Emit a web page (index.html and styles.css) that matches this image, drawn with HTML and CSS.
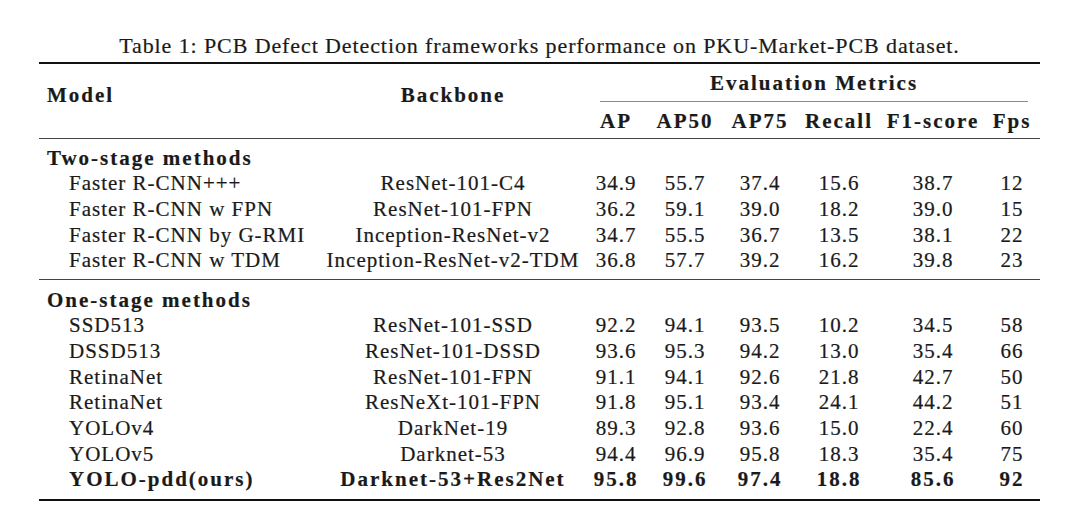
FILE: index.html
```html
<!DOCTYPE html>
<html lang="en">
<head>
<meta charset="utf-8">
<title>Table 1: PCB Defect Detection frameworks performance</title>
<link rel="stylesheet" href="styles.css">
</head>
<body>
<figure class="fig">
  <figcaption class="caption">Table 1: PCB Defect Detection frameworks performance on PKU-Market-PCB dataset.</figcaption>
  <table class="tbl">
    <colgroup>
      <col class="w-model">
      <col class="w-bb">
      <col class="w-ap">
      <col class="w-ap50">
      <col class="w-ap75">
      <col class="w-recall">
      <col class="w-f1">
      <col class="w-fps">
    </colgroup>
    <thead>
      <tr class="h1">
        <th rowspan="2" class="c-model head-span">Model</th>
        <th rowspan="2" class="head-span">Backbone</th>
        <th colspan="6" class="group"><div class="group-label">Evaluation Metrics</div></th>
      </tr>
      <tr class="h2">
        <th>AP</th>
        <th>AP50</th>
        <th>AP75</th>
        <th>Recall</th>
        <th>F1-score</th>
        <th>Fps</th>
      </tr>
    </thead>
    <tbody class="sec sec-first">
      <tr class="sec-head"><td colspan="8" class="c-model">Two-stage methods</td></tr>
      <tr><td class="c-name">Faster R-CNN+++</td><td>ResNet-101-C4</td><td>34.9</td><td>55.7</td><td>37.4</td><td>15.6</td><td>38.7</td><td>12</td></tr>
      <tr><td class="c-name">Faster R-CNN w FPN</td><td>ResNet-101-FPN</td><td>36.2</td><td>59.1</td><td>39.0</td><td>18.2</td><td>39.0</td><td>15</td></tr>
      <tr><td class="c-name">Faster R-CNN by G-RMI</td><td>Inception-ResNet-v2</td><td>34.7</td><td>55.5</td><td>36.7</td><td>13.5</td><td>38.1</td><td>22</td></tr>
      <tr><td class="c-name">Faster R-CNN w TDM</td><td>Inception-ResNet-v2-TDM</td><td>36.8</td><td>57.7</td><td>39.2</td><td>16.2</td><td>39.8</td><td>23</td></tr>
    </tbody>
    <tbody class="sec sec-next sec-last">
      <tr class="sec-head"><td colspan="8" class="c-model">One-stage methods</td></tr>
      <tr><td class="c-name">SSD513</td><td>ResNet-101-SSD</td><td>92.2</td><td>94.1</td><td>93.5</td><td>10.2</td><td>34.5</td><td>58</td></tr>
      <tr><td class="c-name">DSSD513</td><td>ResNet-101-DSSD</td><td>93.6</td><td>95.3</td><td>94.2</td><td>13.0</td><td>35.4</td><td>66</td></tr>
      <tr><td class="c-name">RetinaNet</td><td>ResNet-101-FPN</td><td>91.1</td><td>94.1</td><td>92.6</td><td>21.8</td><td>42.7</td><td>50</td></tr>
      <tr><td class="c-name">RetinaNet</td><td>ResNeXt-101-FPN</td><td>91.8</td><td>95.1</td><td>93.4</td><td>24.1</td><td>44.2</td><td>51</td></tr>
      <tr><td class="c-name">YOLOv4</td><td>DarkNet-19</td><td>89.3</td><td>92.8</td><td>93.6</td><td>15.0</td><td>22.4</td><td>60</td></tr>
      <tr><td class="c-name">YOLOv5</td><td>Darknet-53</td><td>94.4</td><td>96.9</td><td>95.8</td><td>18.3</td><td>35.4</td><td>75</td></tr>
      <tr class="ours"><td class="c-name">YOLO-pdd(ours)</td><td>Darknet-53+Res2Net</td><td>95.8</td><td>99.6</td><td>97.4</td><td>18.8</td><td>85.6</td><td>92</td></tr>
    </tbody>
  </table>
</figure>
</body>
</html>
```

FILE: styles.css
```css
html, body {
  margin: 0;
  padding: 0;
  background: #ffffff;
}

body {
  font-family: "Liberation Serif", "Times New Roman", serif;
  color: #1a1a1a;
  -webkit-text-stroke: 0.2px #1a1a1a;
}

.fig {
  margin: 0;
  padding: 34px 40px 0 39px;
  width: 1001px;
}

.caption {
  font-size: 22px;
  line-height: 24px;
  letter-spacing: 0.9px;
  text-align: center;
  margin: 0 0 4px 0;
  white-space: nowrap;
}

.tbl {
  width: 1001px;
  table-layout: fixed;
  border-collapse: separate;
  border-spacing: 0;
  font-size: 21px;
  letter-spacing: 1px;
}

.w-model { width: 281px; }
.w-bb { width: 266px; }
.w-ap { width: 60px; }
.w-ap50 { width: 78px; }
.w-ap75 { width: 72px; }
.w-recall { width: 86px; }
.w-f1 { width: 102px; }
.w-fps { width: 56px; }

.tbl th,
.tbl td {
  padding: 0;
  text-align: center;
  white-space: nowrap;
  vertical-align: middle;
}

.tbl th {
  font-weight: bold;
  letter-spacing: 2px;
  line-height: 24px;
}

/* header rows */
.h1 th {
  border-top: 2px solid #111111;
  padding-top: 7px;
  padding-bottom: 6px;
}

.h1 th.head-span {
  border-bottom: 1px solid #444444;
  padding-top: 0;
  padding-bottom: 12px;
}

.h1 th.group {
  padding-bottom: 0;
}

.group-label {
  margin: 0 12px 0 14px;
  padding-bottom: 6px;
  border-bottom: 1px solid #8a8a8a;
}

.h2 th {
  padding-top: 7px;
  padding-bottom: 5px;
  border-bottom: 1px solid #444444;
}

.tbl .c-model {
  text-align: left;
  padding-left: 8px;
}

/* body */
.tbl td {
  line-height: 25.7px;
}

.sec-head td {
  font-weight: bold;
  letter-spacing: 2px;
  padding-top: 6.5px;
}

.sec-next .sec-head td {
  padding-top: 8px;
}

.tbl td.c-name {
  text-align: left;
  padding-left: 30px;
}

.sec-first tr:last-child td {
  padding-bottom: 4.5px;
}

.sec-last tr:last-child td {
  padding-bottom: 6px;
}

.sec-next tr:first-child td {
  border-top: 1px solid #444444;
}

.sec-last tr:last-child td {
  border-bottom: 2px solid #111111;
}

.ours td {
  font-weight: bold;
  letter-spacing: 2px;
}
```
